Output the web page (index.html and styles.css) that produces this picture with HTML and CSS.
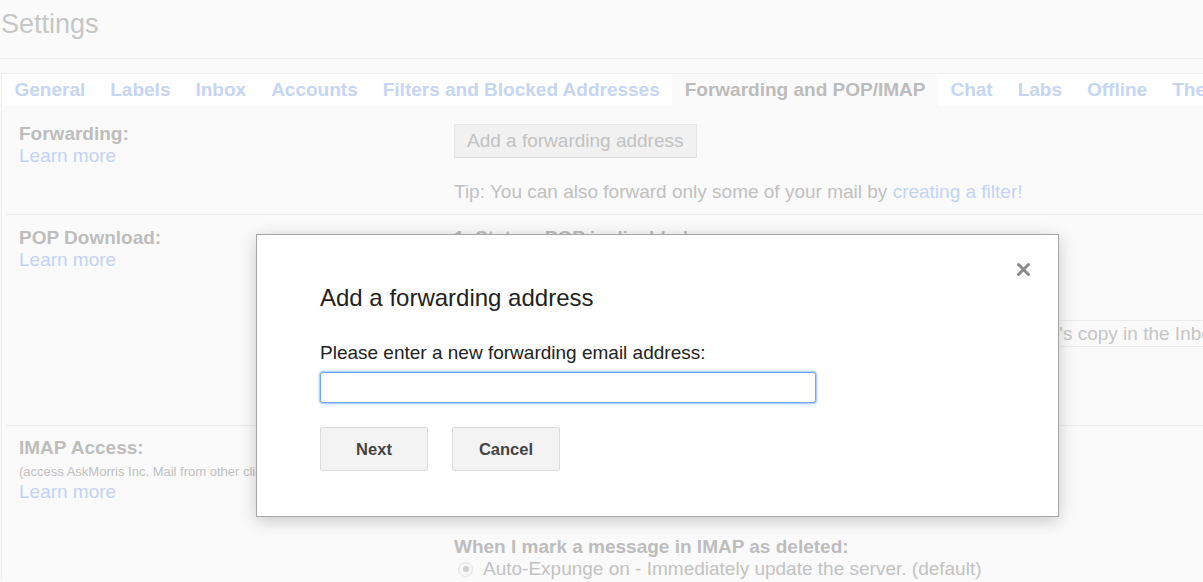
FILE: index.html
```html
<!DOCTYPE html>
<html lang="en">
<head>
    <meta charset="UTF-8">
    <title>Settings - Forwarding and POP/IMAP</title>
    <link rel="stylesheet" href="styles.css">
</head>
<body>
    <div class="page">
        <div class="page-header">
            <h1>Settings</h1>
        </div>

        <div class="settings-box">
            <div class="tabs">
                <a class="tab" href="#">General</a>
                <a class="tab" href="#">Labels</a>
                <a class="tab" href="#">Inbox</a>
                <a class="tab" href="#">Accounts</a>
                <a class="tab" href="#">Filters and Blocked Addresses</a>
                <span class="tab active">Forwarding and POP/IMAP</span>
                <a class="tab" href="#">Chat</a>
                <a class="tab" href="#">Labs</a>
                <a class="tab" href="#">Offline</a>
                <a class="tab" href="#">Themes</a>
            </div>

            <div class="row row-forwarding">
                <div class="row-label">
                    <div class="label">Forwarding:</div>
                    <a class="link" href="#">Learn more</a>
                </div>
                <div class="row-body">
                    <button class="btn-plain">Add a forwarding address</button>
                    <p class="tip">Tip: You can also forward only some of your mail by <a class="link" href="#">creating a filter!</a></p>
                </div>
            </div>

            <div class="row row-pop">
                <div class="row-label">
                    <div class="label">POP Download:</div>
                    <a class="link" href="#">Learn more</a>
                </div>
                <div class="row-body">
                    <div class="label">1. Status: POP is disabled</div>
                    <div class="option">Enable POP for all mail</div>
                    <div class="option">Enable POP for mail that arrives from now on</div>
                    <div class="pop-access">
                        <span class="label">2. When messages are accessed with POP</span>
                        <span class="select">keep AskMorris Inc. Mail's copy in the Inbox</span>
                    </div>
                    <div class="label">3. Configure your email client</div>
                </div>
            </div>

            <div class="row row-imap">
                <div class="row-label">
                    <div class="label">IMAP Access:</div>
                    <div class="note">(access AskMorris Inc. Mail from other clients using IMAP)</div>
                    <a class="link" href="#">Learn more</a>
                </div>
                <div class="row-body">
                    <div class="label">Status: IMAP is enabled</div>
                    <div class="option">Enable IMAP</div>
                    <div class="option">Disable IMAP</div>
                    <div class="label deleted-title">When I mark a message in IMAP as deleted:</div>
                    <label class="radio-line"><span class="radio checked"></span>Auto-Expunge on - Immediately update the server. (default)</label>
                </div>
            </div>
        </div>
    </div>

    <!-- Modal -->
    <div class="dialog">
        <button class="dialog-close" aria-label="Close">
            <svg width="15" height="15" viewBox="0 0 15 15">
                <path d="M2.5 2.5 L12.5 12.5 M12.5 2.5 L2.5 12.5" stroke="#8a8a8a" stroke-width="3" stroke-linecap="round"/>
            </svg>
        </button>
        <h2 class="dialog-title">Add a forwarding address</h2>
        <div class="dialog-label">Please enter a new forwarding email address:</div>
        <input class="dialog-input" type="text">
        <div class="dialog-buttons">
            <button class="btn">Next</button>
            <button class="btn">Cancel</button>
        </div>
    </div>
</body>
</html>
```

FILE: styles.css
```css
body {
    margin: 0;
    font-family: 'Liberation Sans', Arial, sans-serif;
    font-size: 19px;
    background: #fafafa;
    color: #c0c0c0;
    overflow: hidden;
    height: 582px;
}

a {
    text-decoration: none;
}

.page {
    width: 1320px;
}

.page-header {
    height: 58px;
    border-bottom: 1px solid #efefef;
}

.page-header h1 {
    margin: 0;
    padding: 8px 0 0 1px;
    font-size: 27px;
    font-weight: normal;
    line-height: 32px;
    color: #c6c6c6;
}

.settings-box {
    margin: 14px 0 0 1px;
    border-top: 1px solid #efefef;
    border-left: 1px solid #efefef;
}

.tabs {
    display: flex;
    height: 32px;
    background: #fff;
    white-space: nowrap;
}

.tab {
    flex-shrink: 0;
    padding: 0 12.5px;
    font-weight: bold;
    line-height: 32px;
    color: #c5d5f4;
}

.tab.active {
    background: #fafafa;
    color: #bcbcbc;
}

.link {
    color: #c3d3f3;
}

.row {
    display: grid;
    grid-template-columns: 435px 1fr;
    margin-left: 4px;
    padding-left: 13px;
    border-bottom: 1px solid #ececec;
    line-height: 22px;
}

.label {
    font-weight: bold;
    color: #bdbdbd;
}

.row-label .link {
    display: block;
}

.row-forwarding {
    padding: 17px 0 11px 13px;
}

.btn-plain {
    margin-top: 1px;
    height: 34px;
    padding: 0 12px;
    font-family: inherit;
    font-size: 19px;
    color: #c2c2c2;
    background: #f1f1f1;
    border: 1px solid #e6e6e6;
    border-bottom-color: #dcdcdc;
    border-radius: 1px;
}

.tip {
    margin: 23px 0 0;
}

.row-pop {
    height: 198px;
    padding-top: 12px;
}

.option {
    padding-left: 24px;
}

.pop-access {
    display: flex;
    align-items: center;
    margin-top: 27px;
    white-space: nowrap;
}

.pop-access .label {
    font-weight: normal;
}

.select {
    margin-left: 25px;
    height: 25px;
    padding: 0 8px;
    line-height: 25px;
    color: #c6c6c6;
    border: 1px solid #ececec;
    border-right: none;
}

.row-imap {
    padding-top: 11px;
    border-bottom: none;
}

.note {
    font-size: 13px;
    line-height: 18px;
    margin-top: 4px;
    white-space: nowrap;
}

.deleted-title {
    margin-top: 33px;
}

.radio-line {
    display: flex;
    align-items: center;
    color: #c2c2c2;
}

.radio {
    width: 13px;
    height: 13px;
    margin: 0 10px 0 4px;
    border: 1px solid #e2e2e2;
    border-radius: 50%;
    background: #f6f6f6;
    position: relative;
}

.radio.checked::after {
    content: "";
    position: absolute;
    left: 3.5px;
    top: 3.5px;
    width: 6px;
    height: 6px;
    border-radius: 50%;
    background: #cfcfcf;
}

/* Modal dialog */
.dialog {
    position: absolute;
    left: 256px;
    top: 234px;
    width: 738px;
    padding: 49px 0 45px 63px;
    background: #fff;
    border: 1px solid #a6a6a6;
    box-shadow: 0 4px 16px rgba(0, 0, 0, 0.2);
    color: #222;
}

.dialog-close {
    position: absolute;
    left: 759px;
    top: 27px;
    padding: 0;
    border: none;
    background: none;
    width: 15px;
    height: 15px;
    cursor: pointer;
}

.dialog-close svg {
    display: block;
}

.dialog-title {
    margin: 0;
    font-size: 24px;
    font-weight: normal;
    line-height: 28px;
}

.dialog-label {
    margin-top: 30px;
    line-height: 22px;
}

.dialog-input {
    display: block;
    box-sizing: border-box;
    width: 496px;
    height: 31px;
    margin-top: 8px;
    border: 1px solid #6ea6f8;
    border-radius: 3px;
    box-shadow: 0 0 2px 1px rgba(110, 166, 248, 0.7);
    outline: none;
}

.dialog-buttons {
    display: flex;
    gap: 24px;
    margin-top: 24px;
}

.btn {
    width: 108px;
    height: 44px;
    font-family: inherit;
    font-size: 16.5px;
    font-weight: bold;
    color: #444;
    background: #f3f3f3;
    border: 1px solid #dcdcdc;
    border-radius: 2px;
    cursor: pointer;
}
```
